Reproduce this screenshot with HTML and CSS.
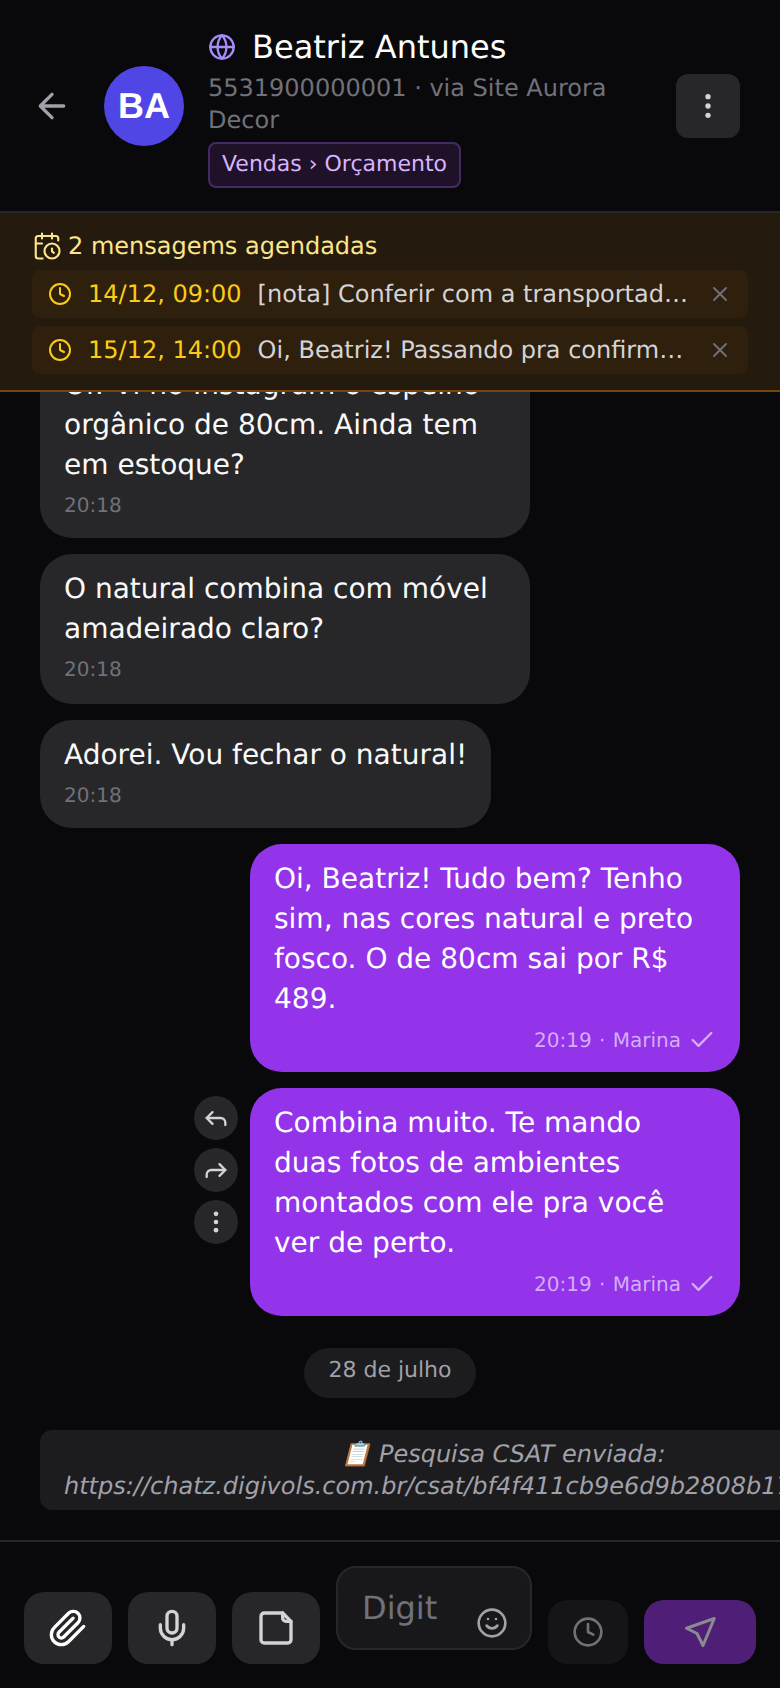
FILE: index.html
```html
<!DOCTYPE html>
<html lang="pt-BR">
<head>
  <meta charset="UTF-8" />
  <meta name="viewport" content="width=device-width, initial-scale=1.0"/>
  <title>Beatriz Antunes</title>
  <link rel="stylesheet" href="styles.css">
</head>
<body>

<div class="app">

  <header class="chat-header">
    <button class="back-btn">
      <svg width="40" height="40" viewBox="0 0 24 24" class="icon"><path d="M19 12H5M12 19l-7-7 7-7"/></svg>
    </button>
    <div class="avatar">BA</div>
    <div class="contact">
      <div class="contact-name">
        <svg width="28" height="28" viewBox="0 0 24 24" class="icon globe"><circle cx="12" cy="12" r="10"/><path d="M2 12h20M12 2a15 15 0 0 1 0 20M12 2a15 15 0 0 0 0 20"/></svg>
        <span>Beatriz Antunes</span>
      </div>
      <div class="contact-sub">5531900000001 · via Site Aurora Decor</div>
      <div class="tag">Vendas › Orçamento</div>
    </div>
    <button class="menu-btn">
      <svg width="32" height="32" viewBox="0 0 24 24" class="dots"><circle cx="12" cy="5" r="2"/><circle cx="12" cy="12" r="2"/><circle cx="12" cy="19" r="2"/></svg>
    </button>
  </header>

  <section class="scheduled">
    <div class="scheduled-title">
      <svg width="30" height="30" viewBox="0 0 24 24" class="icon cal"><path d="M21 7.5V6a2 2 0 0 0-2-2H5a2 2 0 0 0-2 2v14a2 2 0 0 0 2 2h3.5M16 2v4M8 2v4M3 10h5M17.5 17.5 16 16.3V14"/><circle cx="16" cy="16" r="6"/></svg>
      <span>2 mensagems agendadas</span>
    </div>
    <div class="scheduled-row">
      <svg width="24" height="24" viewBox="0 0 24 24" class="icon row-clock"><circle cx="12" cy="12" r="10"/><path d="M12 6v6l4 2"/></svg>
      <span class="row-date">14/12, 09:00</span>
      <span class="row-text">[nota] Conferir com a transportadora o prazo de entrega</span>
      <svg width="24" height="24" viewBox="0 0 24 24" class="icon row-close"><path d="M18 6 6 18M6 6l12 12"/></svg>
    </div>
    <div class="scheduled-row">
      <svg width="24" height="24" viewBox="0 0 24 24" class="icon row-clock"><circle cx="12" cy="12" r="10"/><path d="M12 6v6l4 2"/></svg>
      <span class="row-date">15/12, 14:00</span>
      <span class="row-text">Oi, Beatriz! Passando pra confirmar a entrega do seu espelho</span>
      <svg width="24" height="24" viewBox="0 0 24 24" class="icon row-close"><path d="M18 6 6 18M6 6l12 12"/></svg>
    </div>
  </section>

  <main class="messages">
    <div class="msg in">
      <p>Oi! Vi no Instagram o espelho orgânico de 80cm. Ainda tem em estoque?</p>
      <div class="meta">20:18</div>
    </div>
    <div class="msg in roomy">
      <p>O natural combina com móvel amadeirado claro?</p>
      <div class="meta">20:18</div>
    </div>
    <div class="msg in">
      <p>Adorei. Vou fechar o natural!</p>
      <div class="meta">20:18</div>
    </div>
    <div class="msg out">
      <p>Oi, Beatriz! Tudo bem? Tenho sim, nas cores natural e preto fosco. O de 80cm sai por R$ 489.</p>
      <div class="meta">
        <span>20:19 · Marina</span>
        <svg width="28" height="28" viewBox="0 0 24 24" class="icon"><path d="M20 6 9 17l-5-5"/></svg>
      </div>
    </div>
    <div class="msg out">
      <div class="msg-actions">
        <button class="action"><svg width="28" height="28" viewBox="0 0 24 24" class="icon"><path d="M9 17l-5-5 5-5"/><path d="M20 18v-2a4 4 0 0 0-4-4H4"/></svg></button>
        <button class="action"><svg width="28" height="28" viewBox="0 0 24 24" class="icon"><path d="M15 17l5-5-5-5"/><path d="M4 18v-2a4 4 0 0 1 4-4h12"/></svg></button>
        <button class="action"><svg width="28" height="28" viewBox="0 0 24 24" class="dots"><circle cx="12" cy="5" r="2"/><circle cx="12" cy="12" r="2"/><circle cx="12" cy="19" r="2"/></svg></button>
      </div>
      <p>Combina muito. Te mando duas fotos de ambientes montados com ele pra você ver de perto.</p>
      <div class="meta">
        <span>20:19 · Marina</span>
        <svg width="28" height="28" viewBox="0 0 24 24" class="icon"><path d="M20 6 9 17l-5-5"/></svg>
      </div>
    </div>
    <div class="date-pill">28 de julho</div>
    <div class="system-msg">📋 Pesquisa CSAT enviada:
https://chatz.digivols.com.br/csat/bf4f411cb9e6d9b2808b17a4c3e1f057f</div>
  </main>

  <footer class="composer">
    <button class="tool-btn">
      <svg width="40" height="40" viewBox="0 0 24 24" class="icon clip"><path d="m21.44 11.05-9.19 9.19a6 6 0 0 1-8.49-8.49l8.57-8.57A4 4 0 1 1 18 8.84l-8.59 8.57a2 2 0 0 1-2.83-2.83l8.49-8.48"/></svg>
    </button>
    <button class="tool-btn">
      <svg width="40" height="40" viewBox="0 0 24 24" class="icon"><path d="M12 2a3 3 0 0 0-3 3v7a3 3 0 0 0 6 0V5a3 3 0 0 0-3-3Z"/><path d="M19 10v2a7 7 0 0 1-14 0v-2M12 19v3"/></svg>
    </button>
    <button class="tool-btn">
      <svg width="40" height="40" viewBox="0 0 24 24" class="icon"><path d="M16 3H5a2 2 0 0 0-2 2v14a2 2 0 0 0 2 2h14a2 2 0 0 0 2-2V8Z"/><path d="M16 3v3a2 2 0 0 0 2 2h3"/></svg>
    </button>
    <div class="input-box">
      <span class="placeholder">Digit</span>
      <svg width="32" height="32" viewBox="0 0 24 24" class="icon smile"><circle cx="12" cy="12" r="10"/><path d="M8 14s1.5 2 4 2 4-2 4-2"/><path d="M9 9h.01M15 9h.01"/></svg>
    </div>
    <button class="schedule-btn">
      <svg width="32" height="32" viewBox="0 0 24 24" class="icon"><circle cx="12" cy="12" r="10"/><path d="M12 6v6l4 2"/></svg>
    </button>
    <button class="send-btn">
      <svg width="36" height="36" viewBox="0 0 24 24" class="icon"><path d="M21.5 3 3 9.5l7 3.5 4 8z"/></svg>
    </button>
  </footer>

</div>

</body>
</html>
```

FILE: styles.css
```css
* {
  box-sizing: border-box;
}

body {
  margin: 0;
  background: #09090b;
  color: #fafafa;
  font-family: "DejaVu Sans", sans-serif;
  text-rendering: geometricPrecision;
}

button {
  border: none;
  padding: 0;
  font: inherit;
  display: flex;
  align-items: center;
  justify-content: center;
}

p {
  margin: 0;
}

.icon {
  fill: none;
  stroke: currentColor;
  stroke-width: 2;
  stroke-linecap: round;
  stroke-linejoin: round;
  flex: none;
}

.dots {
  fill: currentColor;
  flex: none;
}

.app {
  height: 1688px;
  display: flex;
  flex-direction: column;
  overflow: hidden;
}

/* header */
.chat-header {
  display: flex;
  align-items: center;
  padding: 24px 40px 23px 32px;
  border-bottom: 2px solid #27272a;
  flex: none;
}

.back-btn {
  width: 40px;
  height: 40px;
  margin-right: 32px;
  background: none;
  color: #a1a1aa;
  flex: none;
}

.avatar {
  width: 80px;
  height: 80px;
  margin-right: 24px;
  border-radius: 50%;
  background: #4f46e5;
  color: #fff;
  font-family: "Liberation Sans", sans-serif;
  font-size: 36px;
  font-weight: 700;
  display: flex;
  align-items: center;
  justify-content: center;
  flex: none;
}

.contact {
  flex: 1;
  min-width: 0;
  padding-right: 24px;
}

.contact-name {
  display: flex;
  align-items: center;
  gap: 16px;
  height: 48px;
  padding-bottom: 2px;
  font-size: 32px;
  color: #fff;
}

.globe {
  color: #a78bfa;
}

.contact-sub {
  font-size: 24px;
  line-height: 32px;
  color: #71717a;
}

.tag {
  display: inline-block;
  margin-top: 6px;
  padding: 4px 12px;
  border: 2px solid #432a66;
  border-radius: 8px;
  background: #1f1228;
  color: #d8b4fe;
  font-size: 22px;
  line-height: 34px;
}

.menu-btn {
  width: 64px;
  height: 64px;
  border-radius: 12px;
  background: #27272a;
  color: #d4d4d8;
  flex: none;
}

/* scheduled messages */
.scheduled {
  padding: 16px 32px;
  background: #241a0e;
  border-bottom: 2px solid #78450f;
  display: flex;
  flex-direction: column;
  gap: 8px;
  flex: none;
}

.scheduled-title {
  display: flex;
  align-items: center;
  gap: 6px;
  height: 32px;
  margin-top: 1px;
  font-size: 24px;
  color: #fde68a;
}

.cal {
  stroke-width: 1.7;
}

.scheduled-row {
  display: flex;
  align-items: center;
  height: 48px;
  padding: 0 16px;
  border-radius: 8px;
  background: #2f1f0d;
  font-size: 24px;
}

.row-clock {
  color: #facc15;
  margin-right: 16px;
}

.row-date {
  color: #facc15;
  margin-right: 16px;
  white-space: nowrap;
}

.row-text {
  flex: 1;
  min-width: 0;
  color: #d4d4d8;
  white-space: nowrap;
  overflow: hidden;
  text-overflow: ellipsis;
}

.row-close {
  color: #71717a;
  margin-left: 16px;
}

/* messages */
.messages {
  flex: 1;
  min-height: 0;
  overflow: hidden;
  display: flex;
  flex-direction: column;
  justify-content: flex-end;
  align-items: flex-start;
  gap: 16px;
  padding: 0 40px 30px;
}

.msg {
  position: relative;
  max-width: 490px;
  padding: 15px 24px 16px;
  border-radius: 32px;
  font-size: 28px;
  line-height: 40px;
  flex: none;
}

.msg.in {
  background: #27272a;
  color: #fafafa;
}

.msg.roomy {
  padding-bottom: 18px;
}

.msg.out {
  width: 490px;
  align-self: flex-end;
  background: #9333ea;
  color: #fff;
}

.meta {
  display: flex;
  align-items: center;
  height: 37px;
  padding-top: 2px;
  font-size: 20px;
  line-height: 28px;
  color: #71717a;
}

.msg.out .meta {
  justify-content: flex-end;
  gap: 7px;
  padding-top: 4px;
  word-spacing: 1px;
  color: #d4adf7;
}

.msg-actions {
  position: absolute;
  right: 100%;
  top: 8px;
  margin-right: 12px;
  display: flex;
  flex-direction: column;
  gap: 8px;
}

.action {
  width: 44px;
  height: 44px;
  border-radius: 50%;
  background: #27272a;
  color: #d4d4d8;
}

.date-pill {
  align-self: center;
  margin: 16px 0;
  padding: 6px 24px 10px;
  border-radius: 25px;
  background: #1c1c1f;
  color: #a1a1aa;
  font-size: 22px;
  line-height: 34px;
  flex: none;
}

.system-msg {
  width: max-content;
  padding: 8px 24px;
  border-radius: 12px;
  background: #1c1c1f;
  color: #a1a1aa;
  font-size: 24px;
  font-style: italic;
  line-height: 32px;
  text-align: center;
  white-space: pre-line;
  flex: none;
}

/* composer */
.composer {
  display: flex;
  align-items: flex-end;
  gap: 16px;
  padding: 24px;
  border-top: 2px solid #27272a;
  flex: none;
}

.tool-btn {
  width: 88px;
  height: 72px;
  border-radius: 20px;
  background: #27272a;
  color: #d4d4d8;
  flex: none;
}

.clip {
  color: #fff;
}

.input-box {
  position: relative;
  width: 196px;
  height: 84px;
  margin-bottom: 14px;
  padding: 20px 24px;
  border: 2px solid #27272a;
  border-radius: 20px;
  background: #18181b;
  flex: none;
}

.placeholder {
  font-size: 32px;
  line-height: 40px;
  color: #71717a;
}

.smile {
  position: absolute;
  right: 22px;
  bottom: 9px;
  color: #a1a1aa;
}

.schedule-btn {
  width: 80px;
  height: 64px;
  border-radius: 20px;
  background: #151517;
  color: #71717a;
  flex: none;
}

.send-btn {
  width: 112px;
  height: 64px;
  border-radius: 20px;
  background: #4f1f78;
  color: #8a8a8f;
  flex: none;
}
```
